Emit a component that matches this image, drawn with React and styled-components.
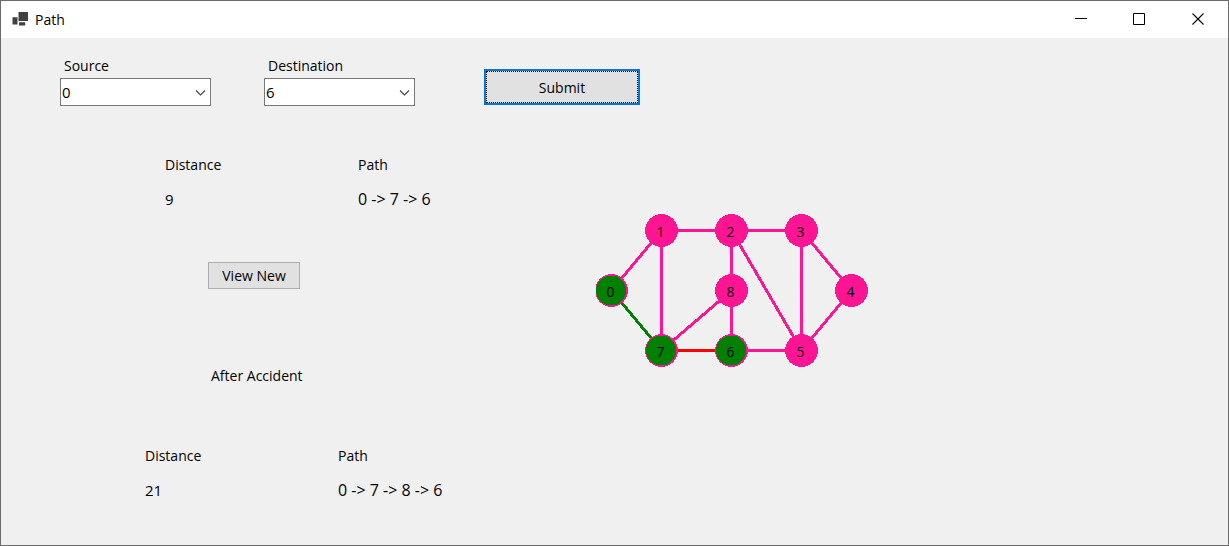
import React, { useState } from "react";
import styled, { createGlobalStyle } from "styled-components";

const GlobalStyle = createGlobalStyle`
  *, *::before, *::after { box-sizing: border-box; }
  body { margin: 0; background: #f0f0f0; }
  body, button, select {
    font-family: "Open Sans", "Noto Sans", sans-serif;
    font-size: 14px;
    line-height: 20px;
    color: #000;
  }
`;

const Window = styled.main`
  min-height: 100vh;
  display: flex;
  flex-direction: column;
  border: 1px solid #6b6b6b;
  background: #f0f0f0;
`;

const TitleBar = styled.header`
  display: flex;
  align-items: center;
  justify-content: space-between;
  height: 37px;
  padding-left: 11px;
  background: #fff;
`;

const Title = styled.h1`
  display: flex;
  align-items: center;
  gap: 6px;
  margin: 0;
  font-size: 14px;
  font-weight: 400;
`;

const Caption = styled.div`
  display: flex;
  height: 100%;
`;

const CaptionButton = styled.button`
  display: flex;
  align-items: center;
  justify-content: center;
  width: 59px;
  padding: 0;
  border: 0;
  background: transparent;
`;

const Toolbar = styled.form`
  display: flex;
  align-items: flex-end;
  padding: 18px 59px 0;
`;

const Field = styled.div`
  display: flex;
  flex-direction: column;
  gap: 2px;
  width: 151px;
  margin-right: ${(p) => p.$after}px;
`;

const Label = styled.label`
  padding-left: 4px;
`;

const Combo = styled.div`
  position: relative;
  display: flex;
`;

const Select = styled.select`
  appearance: none;
  width: 100%;
  height: 28px;
  padding: 0 24px 0 1px;
  border: 1px solid #7a7a7a;
  border-radius: 0;
  background: #fff;
  font-size: 15px;
`;

const Chevron = styled.svg`
  position: absolute;
  top: 12px;
  right: 5px;
  pointer-events: none;
`;

const Button = styled.button`
  width: 92px;
  height: 27px;
  padding: 0;
  border: 1px solid #adadad;
  background: #e1e1e1;
`;

const PrimaryButton = styled(Button)`
  width: 156px;
  height: 36px;
  margin-bottom: 1px;
  padding-top: 2px;
  border: 2px solid #0078d7;
  outline: 1px dotted #000;
  outline-offset: -3px;
`;

const Content = styled.div`
  display: flex;
  align-items: flex-start;
`;

const Report = styled.section`
  display: flex;
  flex-direction: column;
  align-items: flex-start;
  width: 595px;
  flex-shrink: 0;
  padding: 49px 0 45px 144px;
`;

const Result = styled.dl`
  display: grid;
  grid-template-columns: 193px auto;
  grid-template-rows: 20px 20px;
  grid-auto-flow: column;
  row-gap: 14px;
  margin: 0 0 0 ${(p) => p.$indent || 0}px;
`;

const Term = styled.dt``;

const Value = styled.dd`
  margin: 0;
  font-size: 15px;
`;

const RouteValue = styled(Value)`
  font-size: 16px;
`;

const ViewButton = styled(Button)`
  margin: 53px 0 77px 63px;
`;

const Heading = styled.h2`
  margin: 0 0 60px 66px;
  font-size: 14px;
  font-weight: 400;
`;

const Graph = styled.svg`
  flex-shrink: 0;
  margin-top: 108px;
`;

const NodeLabel = styled.text`
  font-size: 14px;
  text-anchor: middle;
  fill: #000;
`;

const PINK = "#ff1493";
const GREEN = "#008000";

const nodes = [
  { x: 15.5, y: 76.5, visited: true },
  { x: 65.5, y: 16.5 },
  { x: 135.5, y: 16.5 },
  { x: 205.5, y: 16.5 },
  { x: 255.5, y: 76.5 },
  { x: 205.5, y: 136.5 },
  { x: 135.5, y: 136.5, visited: true },
  { x: 65.5, y: 136.5, visited: true },
  { x: 135.5, y: 76.5 },
];

const edges = [
  [0, 1], [1, 2], [2, 3], [3, 4], [4, 5], [5, 6], [1, 7],
  [2, 8], [8, 6], [8, 7], [2, 5], [3, 5],
  [0, 7, GREEN], [7, 6, "#ff0000"],
];

function ComboBox({ id, label, initial, after }) {
  const [value, setValue] = useState(initial);
  return (
    <Field $after={after}>
      <Label htmlFor={id}>{label}</Label>
      <Combo>
        <Select id={id} value={value} onChange={(e) => setValue(e.target.value)}>
          {nodes.map((_, i) => (
            <option key={i} value={i}>{i}</option>
          ))}
        </Select>
        <Chevron width="11" height="6" viewBox="0 0 11 6" aria-hidden="true">
          <path d="M1 .5l4.5 4.5L10 .5" fill="none" stroke="#444" strokeWidth="1.1" />
        </Chevron>
      </Combo>
    </Field>
  );
}

function PathResult({ distance, path, indent }) {
  return (
    <Result $indent={indent}>
      <Term>Distance</Term>
      <Value>{distance}</Value>
      <Term>Path</Term>
      <RouteValue>{path.join(" -> ")}</RouteValue>
    </Result>
  );
}

export default function App() {
  return (
    <>
      <GlobalStyle />
      <Window>
        <TitleBar>
          <Title>
            <svg width="17" height="16" viewBox="0 0 17 16" aria-hidden="true">
              <path d="M6.5 0h9.5v9H6.5zM.5 5.2h5v7.3H.5zM7 10.2h6.2v3.4H7z" fill="#404040" />
            </svg>
            Path
          </Title>
          <Caption>
            <CaptionButton type="button" aria-label="Minimize">
              <svg width="13" height="13"><path d="M1 5.5h12" stroke="#000" /></svg>
            </CaptionButton>
            <CaptionButton type="button" aria-label="Maximize">
              <svg width="13" height="13"><path d="M.5.5h11v11H.5z" fill="none" stroke="#000" /></svg>
            </CaptionButton>
            <CaptionButton type="button" aria-label="Close">
              <svg width="13" height="13"><path d="M.5.5l11 11M11.5 .5l-11 11" stroke="#000" strokeWidth="1.1" /></svg>
            </CaptionButton>
          </Caption>
        </TitleBar>

        <Toolbar onSubmit={(e) => e.preventDefault()}>
          <ComboBox id="source" label="Source" initial={0} after={53} />
          <ComboBox id="destination" label="Destination" initial={6} after={69} />
          <PrimaryButton type="submit">Submit</PrimaryButton>
        </Toolbar>

        <Content>
          <Report>
            <PathResult distance={9} path={[0, 7, 6]} indent={20} />
            <ViewButton type="button">View New</ViewButton>
            <Heading>After Accident</Heading>
            <PathResult distance={21} path={[0, 7, 8, 6]} />
          </Report>
          <Graph width="274" height="154" role="img" aria-label="Route graph">
            {edges.map(([a, b, color = PINK]) => (
              <line
                key={`${a}-${b}`}
                x1={nodes[a].x}
                y1={nodes[a].y}
                x2={nodes[b].x}
                y2={nodes[b].y}
                stroke={color}
                strokeWidth="3"
                shapeRendering="crispEdges"
              />
            ))}
            {nodes.map((n, i) => (
              <g key={i}>
                <circle cx={n.x} cy={n.y} r="16.4" fill={PINK} shapeRendering="crispEdges" />
                {n.visited && (
                  <circle cx={n.x - 0.3} cy={n.y} r="15" fill={GREEN} shapeRendering="crispEdges" />
                )}
                <NodeLabel x={n.x - 1} y={n.y + 6}>{i}</NodeLabel>
              </g>
            ))}
          </Graph>
        </Content>
      </Window>
    </>
  );
}
